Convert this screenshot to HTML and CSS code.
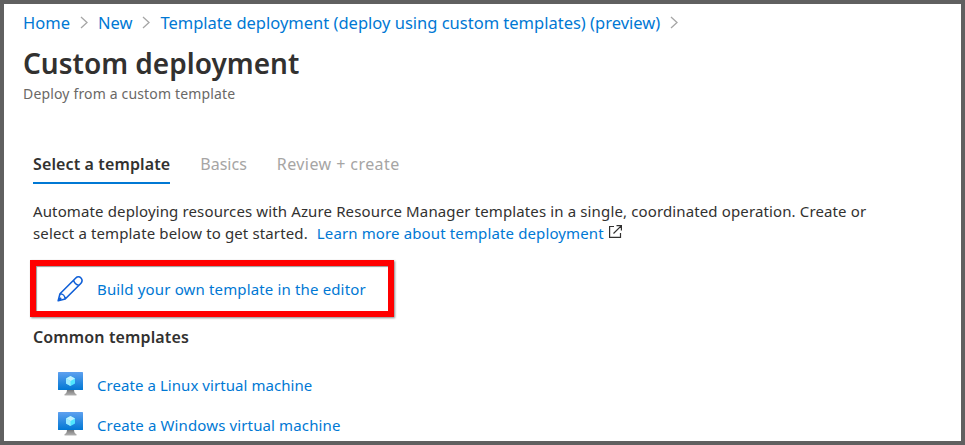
FILE: index.html
```html
<!DOCTYPE html>
<html lang="en">
<head>
<meta charset="utf-8">
<title>Custom deployment</title>
<link rel="stylesheet" href="styles.css">
</head>
<body>
<svg class="defs" width="0" height="0" aria-hidden="true">
  <defs>
    <linearGradient id="screen" x1="0" y1="0" x2="0" y2="1"><stop offset="0" stop-color="#5ea0ef"/><stop offset="1" stop-color="#0078d4"/></linearGradient>
    <linearGradient id="stand" x1="0" y1="0" x2="0" y2="1"><stop offset="0" stop-color="#707070"/><stop offset="1" stop-color="#b3b3b3"/></linearGradient>
    <symbol id="vm" viewBox="0 0 25 24">
      <path fill="url(#stand)" d="M9 17h7c0 3 .6 4.300 2.500 5.300V23.500H6.500v-1.200C8.400 21.300 9 20 9 17z"/>
      <rect width="25" height="18" rx=".6" fill="url(#screen)"/>
      <path fill="#50e6ff" d="M12.500 4l4.500 2.500v5L12.500 14 8 11.500v-5z"/>
      <path fill="#c3f1ff" d="M12.500 4L17 6.500 12.500 9 8 6.500z"/>
      <path fill="#9cebff" d="M8 6.500L12.500 9v5L8 11.500z"/>
    </symbol>
    <symbol id="chevron" viewBox="0 0 8 13"><path d="M1 1l6 5.500L1 12" fill="none" stroke="#a6a6a6" stroke-width="1.300"/></symbol>
  </defs>
</svg>
<main class="page">
  <nav class="crumbs">
    <a>Home</a><svg class="chevron"><use href="#chevron"/></svg>
    <a>New</a><svg class="chevron"><use href="#chevron"/></svg>
    <a>Template deployment (deploy using custom templates) (preview)</a><svg class="chevron"><use href="#chevron"/></svg>
  </nav>
  <header>
    <h1>Custom deployment</h1>
    <p class="subtitle">Deploy from a custom template</p>
  </header>
  <div class="tabs">
    <span class="tab active">Select a template</span>
    <span class="tab">Basics</span>
    <span class="tab review">Review + create</span>
  </div>
  <section class="content">
    <p class="intro">Automate deploying resources with Azure Resource Manager templates in a single, coordinated operation. Create or<br>select a template below to get started.<a class="learn">Learn more about template deployment</a><svg class="external" viewBox="0 0 13 13"><path d="M5 1.500H.6v10.900h10.900V8M7.500.6h4.900v4.900M12.200.8L4.500 8.500" fill="none" stroke="#323130" stroke-width="1.200"/></svg></p>
    <div class="highlight">
      <svg class="pencil" viewBox="0 0 26 26"><path d="M1.200 24.800L3 17.800 18.800 2A3.600 3.600 0 0 1 24 7.200L8.200 23zM3 17.800c2.700 0 5 2.200 5.200 5.200M16.600 4.200c.6 2.800 2.400 4.600 5.200 5.200M1.200 24.800l3-3" fill="none" stroke="#0f5fd7" stroke-width="1.600" stroke-linejoin="round"/></svg>
      <a class="build">Build your own template in the editor</a>
    </div>
    <h2>Common templates</h2>
    <ul class="templates">
      <li><svg class="vm"><use href="#vm"/></svg><a class="linux">Create a Linux virtual machine</a></li>
      <li><svg class="vm"><use href="#vm"/></svg><a>Create a Windows virtual machine</a></li>
    </ul>
  </section>
</main>
</body>
</html>
```
FILE: styles.css
```css
* { box-sizing: border-box; }
body { margin: 0; background: #fff; color: #323130; font: 15px/22px "Noto Sans", "Open Sans", sans-serif; }
h1, h2, p, ul { margin: 0; padding: 0; }
a { color: #0078d4; white-space: nowrap; }
svg { flex: none; }
.defs { position: absolute; }
.page { height: 445px; border: 4px solid #606060; overflow: hidden; }
.crumbs { display: flex; align-items: center; height: 38px; padding-left: 19px; font-size: 16.5px; }
.chevron { width: 8px; height: 13px; margin: 0 10px 1px; }
h1 { margin-left: 19px; height: 40px; font-size: 28px; line-height: 42px; font-weight: 600; white-space: nowrap; }
.subtitle { margin-left: 19px; height: 24px; font-size: 14px; line-height: 24px; letter-spacing: .16px; color: #6a6866; }
.tabs { display: flex; gap: 30px; margin: 42px 0 0 29px; height: 36px; font-size: 16px; line-height: 32px; color: #a6a5a4; }
.tab { white-space: nowrap; }
.active { color: #323130; font-weight: 600; letter-spacing: .12px; border-bottom: 2px solid #0078d4; }
.review { letter-spacing: .43px; }
.content { padding-left: 29px; letter-spacing: .13px; }
.intro { margin-top: 16px; height: 44px; white-space: nowrap; }
.learn { margin-left: 9px; }
.external { width: 13px; height: 13px; margin-left: 5px; vertical-align: 1.5px; }
.highlight { display: flex; align-items: center; width: 364px; height: 57px; margin: 16px 0 0 -3px; border: 6px solid #f00; padding-left: 21px; box-shadow: 1px 1px 2px #888, inset 1px 1px 1px #999; }
.pencil { width: 26px; height: 26px; margin-right: 14px; }
.build { letter-spacing: .15px; }
h2 { margin-top: 8px; height: 24px; font-size: 16px; line-height: 24px; font-weight: 600; }
.templates { list-style: none; margin-top: 16px; padding-left: 25px; }
.templates li { display: flex; align-items: center; height: 40px; }
.vm { width: 25px; height: 24px; margin: 0 14px 2px 0; }
.linux { letter-spacing: .06px; }
```
